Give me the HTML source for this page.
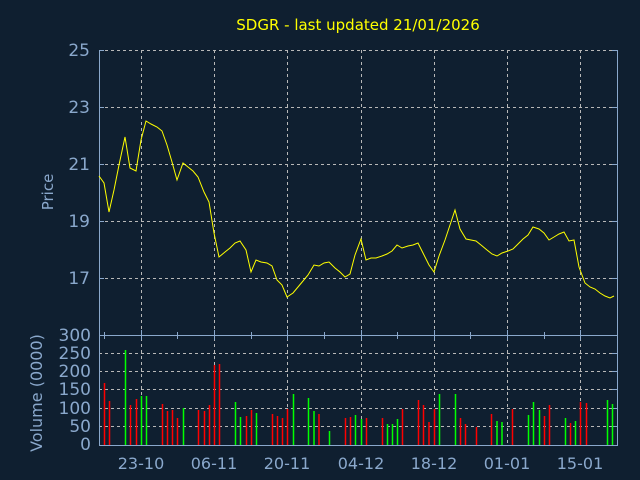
<!DOCTYPE html>
<html><head><style>
html,body{margin:0;padding:0;background:#0f1f30;}
svg{display:block}
text{font-family:"DejaVu Sans","Liberation Sans",sans-serif;fill:#8aa8cc}
</style></head><body>
<svg width="640" height="480" viewBox="0 0 640 480" xmlns="http://www.w3.org/2000/svg">
<rect width="640" height="480" fill="#0f1f30"/>
<text x="358" y="30" text-anchor="middle" font-size="15" style="fill:#ffff00">SDGR - last updated 21/01/2026</text>
<g stroke="#b8b8b8" stroke-width="1" stroke-dasharray="3,3" fill="none">
<path d="M99 50.5H617M99 107.5H617M99 164.5H617M99 221.5H617M99 278.5H617"/>
<path d="M99 353.5H617M99 371.5H617M99 389.5H617M99 408.5H617M99 426.5H617"/>
<path d="M141.5 50V445M214.5 50V445M287.5 50V445M361.5 50V445M434.5 50V445M507.5 50V445M580.5 50V445"/>
</g>
<g stroke="#8aa8cc" stroke-width="1" fill="none">
<path d="M99.5 50V445.5H617.5V50"/>
<path d="M99 335.5H617"/>
<path d="M99 50.5h5M99 107.5h5M99 164.5h5M99 221.5h5M99 278.5h5M612 50.5h5M612 107.5h5M612 164.5h5M612 221.5h5M612 278.5h5"/>
<path d="M612 353.5h5M612 371.5h5M612 389.5h5M612 408.5h5M612 426.5h5"/>
<path d="M104.5 332v7M141.5 330v10M177.5 332v7M214.5 330v10M251.5 332v7M287.5 330v10M324.5 332v7M361.5 330v10M397.5 332v7M434.5 330v10M470.5 332v7M507.5 330v10M544.5 332v7M580.5 330v10"/>
</g>
<g font-size="17" text-anchor="end">
<text x="90" y="56">25</text><text x="90" y="113">23</text><text x="90" y="170">21</text><text x="90" y="227">19</text><text x="90" y="284">17</text>
<text x="91" y="341">300</text><text x="91" y="359">250</text><text x="91" y="377">200</text><text x="91" y="395">150</text><text x="91" y="414">100</text><text x="91" y="432">50</text><text x="91" y="450">0</text>
</g>
<text transform="translate(53,192) rotate(-90)" font-size="15" text-anchor="middle">Price</text>
<text transform="translate(42,393) rotate(-90)" font-size="16" text-anchor="middle">Volume (0000)</text>
<g font-size="16" text-anchor="middle">
<text x="141" y="469">23-10</text><text x="214" y="469">06-11</text><text x="287" y="469">20-11</text><text x="361" y="469">04-12</text><text x="434" y="469">18-12</text><text x="507" y="469">01-01</text><text x="580" y="469">15-01</text>
</g>
<polyline fill="none" stroke="#ffff00" stroke-width="1" points="99,176 104,183 109,212 114,190 119,165 125,137 130,168 136,171 141,140 146,121 151,124 157,127 162,131 167,145 172,162 177,180 183,163 188,167 193,171 198,177 204,192 209,202 214,233 219,257 225,252 230,248 235,243 240,241 246,250 251,272 256,260 261,262 267,263 272,266 277,280 282,285 287,297 293,293 298,287 303,281 308,275 314,265 319,266 324,263 329,262 335,268 340,272 345,277 350,274 355,255 361,239 366,260 371,258 376,258 382,256 387,254 392,251 397,245 402,248 408,246 413,245 418,243 423,253 429,265 434,272 439,256 445,240 450,225 455,210 460,229 466,239 471,240 476,241 481,245 487,250 492,254 497,256 502,253 508,251 513,249 518,244 523,239 528,235 533,227 539,229 544,233 549,240 554,237 559,234 564,232 569,241 574,240 579,267 585,283 590,287 595,289 600,293 605,296 610,298 614,296"/>
<g stroke-width="1.5" stroke="#ff0000">
<path d="M104.5 445V383M109.5 445V401M130.5 445V405M136.5 445V399M162.5 445V404M167.5 445V411M172.5 445V410M177.5 445V418M198.5 445V410M204.5 445V411M209.5 445V405M214.5 445V365M219.5 445V364M246.5 445V416M251.5 445V410M272.5 445V414M277.5 445V416M282.5 445V418M287.5 445V409M319 445V414M345.5 445V418M350.5 445V417M366.5 445V418M382.5 445V418M402.5 445V409M418.5 445V400M423.5 445V405M429 445V422M434.5 445V409M460.5 445V418M465.5 445V424M476.5 445V427M491.5 445V414M512.5 445V409M544.5 445V416M549.5 445V405M570.5 445V423M580.5 445V402M586.5 445V403"/>
</g>
<g stroke-width="1.5" stroke="#00ff00">
<path d="M125.5 445V350M141.5 445V396M146.5 445V396M183.5 445V408M235.5 445V402M240.5 445V417M256.5 445V413M293.5 445V394M308.5 445V398M314 445V411M329.5 445V431M355.5 445V415M361.5 445V419M387.5 445V424M392.5 445V424M397.5 445V419M439.5 445V394M455.5 445V394M497 445V421M502 445V422M528.5 445V415M533.5 445V402M539.5 445V410M565.5 445V418M575.5 445V421M607.5 445V400M612.5 445V404"/>
</g>
</svg>
</body></html>
